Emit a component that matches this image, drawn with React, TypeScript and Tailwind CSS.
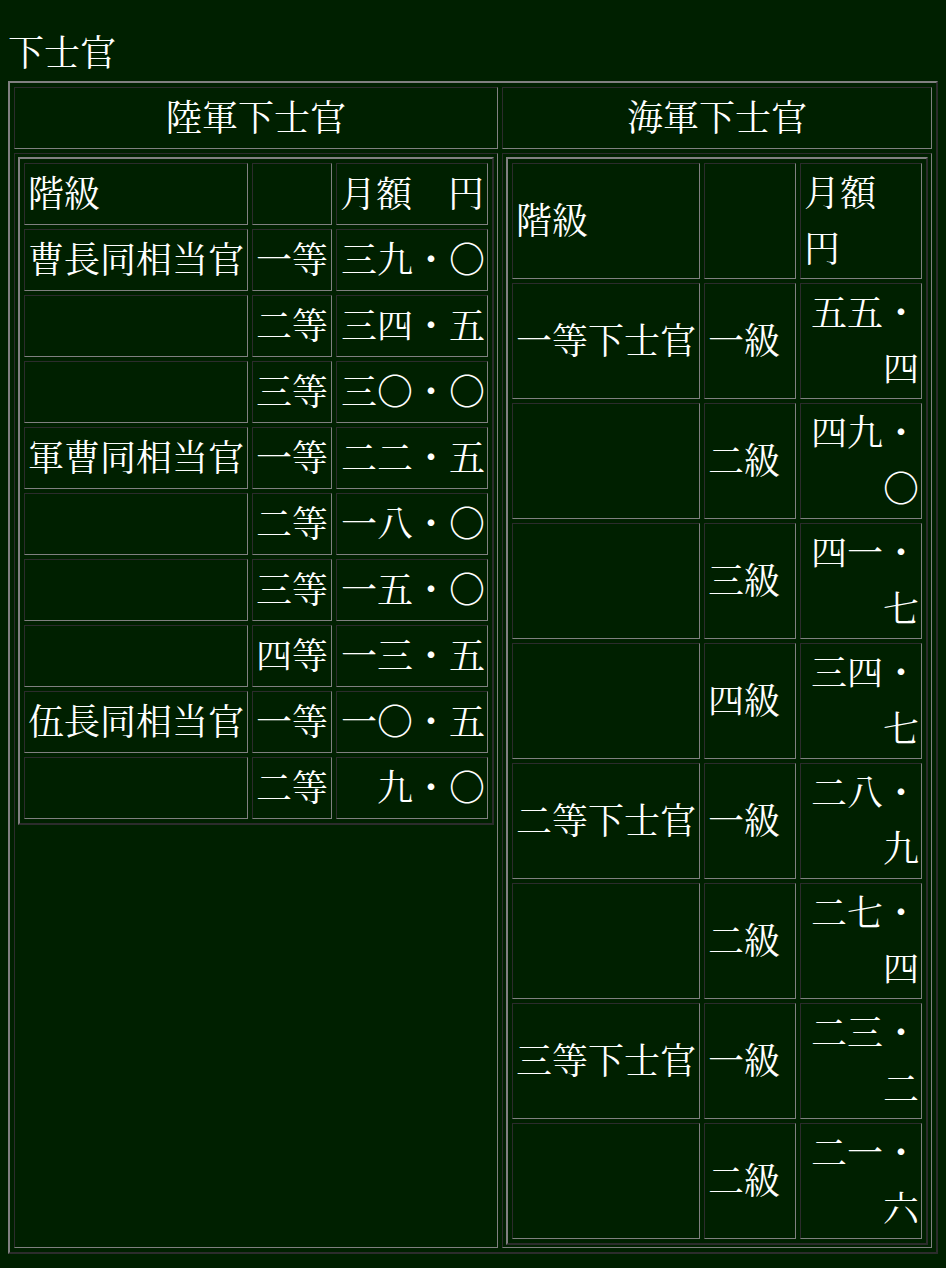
import React from "react";

const inset =
  "border border-solid border-t-[#2c2c2c] border-l-[#2c2c2c] border-r-[#808080] border-b-[#808080]";
const outset =
  "border-2 border-solid border-t-[#808080] border-l-[#808080] border-r-[#2c2c2c] border-b-[#2c2c2c]";

const leftRows: [string, string, string][] = [
  ["曹長同相当官", "一等", "三九・〇"],
  ["", "二等", "三四・五"],
  ["", "三等", "三〇・〇"],
  ["軍曹同相当官", "一等", "二二・五"],
  ["", "二等", "一八・〇"],
  ["", "三等", "一五・〇"],
  ["", "四等", "一三・五"],
  ["伍長同相当官", "一等", "一〇・五"],
  ["", "二等", "九・〇"],
];

const rightRows: [string, string, string, string][] = [
  ["一等下士官", "一級", "五五・", "四"],
  ["", "二級", "四九・", "〇"],
  ["", "三級", "四一・", "七"],
  ["", "四級", "三四・", "七"],
  ["二等下士官", "一級", "二八・", "九"],
  ["", "二級", "二七・", "四"],
  ["三等下士官", "一級", "二三・", "二"],
  ["", "二級", "二一・", "六"],
];

function Cell({
  children,
  align = "left",
}: {
  children?: React.ReactNode;
  align?: "left" | "right" | "center";
}) {
  const a =
    align === "right"
      ? "justify-end text-right pr-[2px]"
      : align === "center"
      ? "justify-center text-center"
      : "justify-start text-left pl-[3px]";
  return (
    <div className={`${inset} flex items-center pb-[5px] ${a} whitespace-nowrap`}>
      <div>{children}</div>
    </div>
  );
}

export default function App() {
  return (
    <div className="min-h-screen bg-[#002000] text-white font-['Noto_Serif_CJK_JP','Noto_Sans_CJK_JP',serif] text-[36px] leading-[56px] px-[8px] pt-[25px] pb-[8px]">
      <div className="h-[56px] leading-[52px]">下士官</div>
      <div className={`${outset} w-[930px] p-[4px] grid grid-cols-[484px_430px] gap-[4px]`}>
        <div className={`${inset} h-[62px] pb-[5px] flex items-center justify-center`}>陸軍下士官</div>
        <div className={`${inset} h-[62px] pb-[5px] flex items-center justify-center`}>海軍下士官</div>

        <div className={`${inset} pt-[3px] px-[3px] pb-[2px]`}>
          <div className={`${outset} p-[4px] grid grid-cols-[224px_80px_152px] auto-rows-[62px] gap-[4px]`}>
            <Cell>階級</Cell>
            <Cell />
            <Cell>月額　円</Cell>
            {leftRows.map((r, i) => (
              <React.Fragment key={i}>
                <Cell>{r[0]}</Cell>
                <Cell>{r[1]}</Cell>
                <Cell align="right">{r[2]}</Cell>
              </React.Fragment>
            ))}
          </div>
        </div>

        <div className={`${inset} pt-[3px] px-[3px] pb-[2px]`}>
          <div className={`${outset} p-[4px] grid grid-cols-[188px_92px_122px] auto-rows-[116px] gap-[4px]`}>
            <Cell>階級</Cell>
            <Cell />
            <Cell>
              月額
              <br />円
            </Cell>
            {rightRows.map((r, i) => (
              <React.Fragment key={i}>
                <Cell>{r[0]}</Cell>
                <Cell>{r[1]}</Cell>
                <Cell align="right">
                  {r[2]}
                  <br />
                  {r[3]}
                </Cell>
              </React.Fragment>
            ))}
          </div>
        </div>
      </div>
    </div>
  );
}
